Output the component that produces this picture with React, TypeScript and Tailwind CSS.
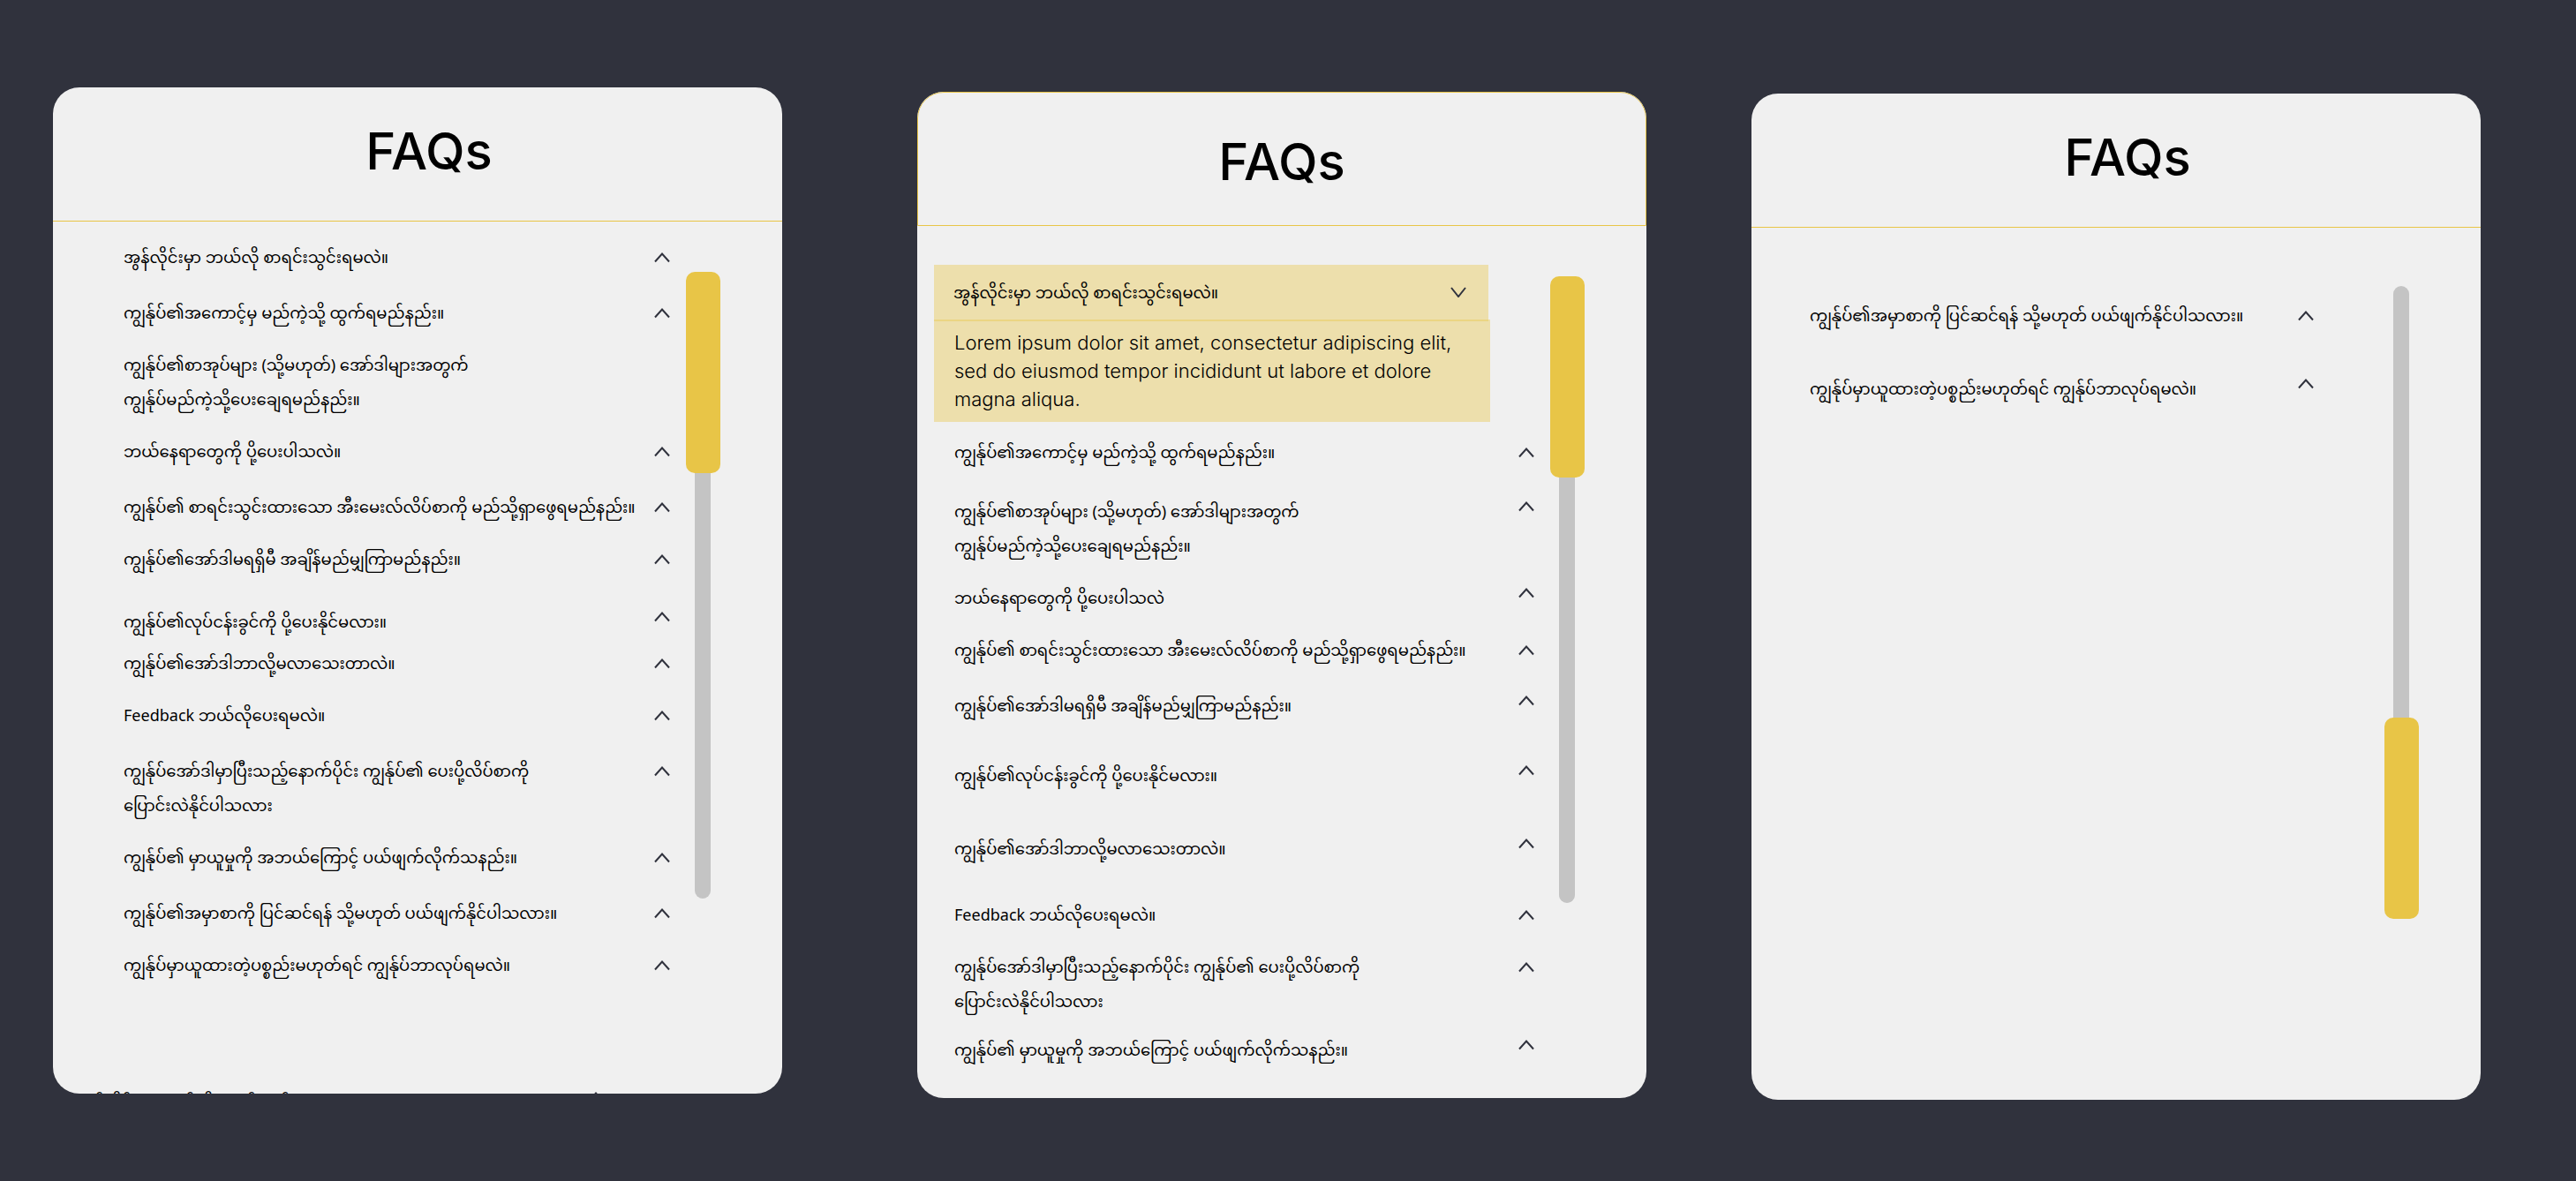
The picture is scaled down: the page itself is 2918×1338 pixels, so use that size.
import React from "react";

type Item = { lines: string[]; gap: string; raised?: boolean; noChevron?: boolean };

const Q = {
  online: "အွန်လိုင်းမှာ ဘယ်လို စာရင်းသွင်းရမလဲ။",
  account: "ကျွန်ုပ်၏အကောင့်မှ မည်ကဲ့သို့ ထွက်ရမည်နည်း။",
  payA: "ကျွန်ုပ်၏စာအုပ်များ (သို့မဟုတ်) အော်ဒါများအတွက်",
  payB: "ကျွန်ုပ်မည်ကဲ့သို့ပေးချေရမည်နည်း။",
  where: "ဘယ်နေရာတွေကို ပို့ပေးပါသလဲ",
  email: "ကျွန်ုပ်၏ စာရင်းသွင်းထားသော အီးမေးလ်လိပ်စာကို မည်သို့ရှာဖွေရမည်နည်း။",
  wait: "ကျွန်ုပ်၏အော်ဒါမရရှိမီ အချိန်မည်မျှကြာမည်နည်း။",
  office: "ကျွန်ုပ်၏လုပ်ငန်းခွင်ကို ပို့ပေးနိုင်မလား။",
  late: "ကျွန်ုပ်၏အော်ဒါဘာလို့မလာသေးတာလဲ။",
  feedback: "Feedback ဘယ်လိုပေးရမလဲ။",
  addrA: "ကျွန်ုပ်အော်ဒါမှာပြီးသည့်နောက်ပိုင်း ကျွန်ုပ်၏ ပေးပို့လိပ်စာကို",
  addrB: "ပြောင်းလဲနိုင်ပါသလား",
  cancelled: "ကျွန်ုပ်၏ မှာယူမှုကို အဘယ်ကြောင့် ပယ်ဖျက်လိုက်သနည်း။",
  edit: "ကျွန်ုပ်၏အမှာစာကို ပြင်ဆင်ရန် သို့မဟုတ် ပယ်ဖျက်နိုင်ပါသလား။",
  wrong: "ကျွန်ုပ်မှာယူထားတဲ့ပစ္စည်းမဟုတ်ရင် ကျွန်ုပ်ဘာလုပ်ရမလဲ။",
};

const firstList: Item[] = [
  { lines: [Q.online], gap: "" },
  { lines: [Q.account], gap: "mt-6" },
  { lines: [Q.payA, Q.payB], gap: "mt-5", noChevron: true },
  { lines: [Q.where + "။"], gap: "mt-5" },
  { lines: [Q.email], gap: "mt-6" },
  { lines: [Q.wait], gap: "mt-5" },
  { lines: [Q.office], gap: "mt-8", raised: true },
  { lines: [Q.late], gap: "mt-2" },
  { lines: [Q.feedback], gap: "mt-5" },
  { lines: [Q.addrA, Q.addrB], gap: "mt-6" },
  { lines: [Q.cancelled], gap: "mt-5" },
  { lines: [Q.edit], gap: "mt-6" },
  { lines: [Q.wrong], gap: "mt-5" },
];

const secondList: Item[] = [
  { lines: [Q.account], gap: "" },
  { lines: [Q.payA, Q.payB], gap: "mt-7", raised: true },
  { lines: [Q.where], gap: "mt-5", raised: true },
  { lines: [Q.email], gap: "mt-5" },
  { lines: [Q.wait], gap: "mt-6", raised: true },
  { lines: [Q.office], gap: "mt-10", raised: true },
  { lines: [Q.late], gap: "mt-11", raised: true },
  { lines: [Q.feedback], gap: "mt-9" },
  { lines: [Q.addrA, Q.addrB], gap: "mt-5" },
  { lines: [Q.cancelled], gap: "mt-4", raised: true },
];

const thirdList: Item[] = [
  { lines: [Q.edit], gap: "" },
  { lines: [Q.wrong], gap: "mt-11", raised: true },
];

function Chevron({ down }: { down?: boolean }) {
  return (
    <svg width="18" height="12" viewBox="0 0 18 12" fill="none" stroke="#30323d" strokeWidth="2" aria-hidden="true">
      <path d={down ? "M1 1L9 11L17 1" : "M1 10.5L9 1.5L17 10.5"} />
    </svg>
  );
}

function Row({ item }: { item: Item }) {
  return (
    <li className={item.gap}>
      <button type="button" className="flex w-full items-start justify-between text-left">
        <span className="text-lg leading-[39px] whitespace-nowrap">
          {item.lines.map((l) => (
            <span key={l} className="block">
              {l}
            </span>
          ))}
        </span>
        {!item.noChevron && (
          <span className={item.raised ? "flex h-7 items-center" : "flex h-[39px] items-center"}>
            <Chevron />
          </span>
        )}
      </button>
    </li>
  );
}

function Scrollbar({ id, atEnd }: { id: string; atEnd?: boolean }) {
  return (
    <div
      role="scrollbar"
      aria-controls={id}
      aria-valuenow={atEnd ? 100 : 0}
      className={
        atEnd
          ? "relative flex h-[717px] w-[39px] flex-col items-center justify-end"
          : "relative flex h-[710px] w-[39px] flex-col items-center justify-start"
      }
    >
      <div className="absolute inset-y-0 left-[10px] w-[18px] rounded-full bg-[#c4c4c4]" />
      <div className="relative h-[228px] w-full rounded-[10px] bg-[#e8c547]" />
    </div>
  );
}

const card = "min-w-0 flex-1 overflow-hidden rounded-[30px] bg-[#f0f0f0] h-[1140px]";
const title = "text-center text-[58px] leading-[84px] font-medium font-['Inter']";

export default function App() {
  return (
    <main className="flex min-h-screen items-start bg-[#30323d] pt-[99px] pr-[108px] pb-[92px] pl-[60px] font-['Noto_Sans','Noto_Sans_Myanmar',sans-serif] text-black">
      <section className={card}>
        <header className="flex h-[152px] justify-center border-b border-[#e8c547] pt-[30px] pl-[26px]">
          <h1 className={title}>FAQs</h1>
        </header>
        <div className="flex justify-between pr-[70px] pl-20">
          <ul id="faq-1" className="w-[619px] pt-[21px]">
            {firstList.map((it) => (
              <Row key={it.lines[0]} item={it} />
            ))}
          </ul>
          <div className="pt-[57px]">
            <Scrollbar id="faq-1" />
          </div>
        </div>
        <ul className="w-[624px] pt-[116px] pl-7">
          <Row item={{ lines: [Q.online], gap: "", raised: true }} />
        </ul>
      </section>

      <section className={card + " mt-[5px] ml-[153px]"}>
        <header className="flex h-[152px] justify-center rounded-t-[30px] border border-[#e8c547] pt-9">
          <h1 className={title}>FAQs</h1>
        </header>
        <div className="flex justify-between pr-[70px] pl-[19px]">
          <div className="w-[680px] pt-11">
            <button type="button" className="flex h-16 w-[628px] items-center justify-between bg-[#e8c547]/40 pr-[25px] pb-0.5 pl-[22px] text-lg">
              <span>{Q.online}</span>
              <Chevron down />
            </button>
            <p className="-mt-0.5 w-[630px] bg-[#e8c547]/40 py-[10px] pl-[23px] font-['Inter'] text-[22px] leading-8 font-light">
              Lorem ipsum dolor sit amet, consectetur adipiscing elit,
              <br />
              sed do eiusmod tempor incididunt ut labore et dolore
              <br />
              magna aliqua.
            </p>
            <ul id="faq-2" className="pt-[15px] pl-[23px]">
              {secondList.map((it) => (
                <Row key={it.lines[0]} item={it} />
              ))}
            </ul>
          </div>
          <div className="pt-[57px]">
            <Scrollbar id="faq-2" />
          </div>
        </div>
      </section>

      <section className={card + " mt-[7px] ml-[119px]"}>
        <header className="flex h-[152px] justify-center border-b border-[#e8c547] pt-[30px] pl-[26px]">
          <h1 className={title}>FAQs</h1>
        </header>
        <div className="flex justify-between pr-[70px] pl-[66px]">
          <ul id="faq-3" className="w-[571px] pt-20">
            {thirdList.map((it) => (
              <Row key={it.lines[0]} item={it} />
            ))}
          </ul>
          <div className="pt-[66px]">
            <Scrollbar id="faq-3" atEnd />
          </div>
        </div>
      </section>
    </main>
  );
}
